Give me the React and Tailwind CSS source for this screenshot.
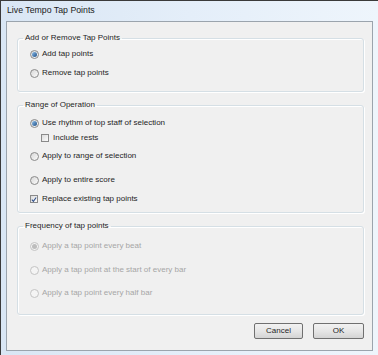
import React from 'react';

const font = { fontFamily: '"Liberation Sans", Arial, sans-serif' };

function Radio({ checked, disabled }) {
  return (
    <span
      className={`relative flex items-center justify-center w-[9px] h-[9px] rounded-full border ${
        disabled ? 'border-[#c4c4c4] bg-[#f4f4f4]' : 'border-[#8a8a8a] bg-gradient-to-br from-[#d8d8d8] to-[#fbfbfb]'
      }`}
    >
      {checked && (
        <span
          className={`w-[5px] h-[5px] rounded-full ${
            disabled ? 'bg-[#bdbdbd]' : 'bg-gradient-to-br from-[#8fc1ec] to-[#1d4f86]'
          }`}
        />
      )}
    </span>
  );
}

function Check({ checked }) {
  return (
    <span className="flex items-center justify-center w-[8px] h-[8px] border border-[#8a8a8a] bg-gradient-to-br from-[#dcdcdc] to-[#fbfbfb]">
      {checked && (
        <svg width="7" height="7" viewBox="0 0 7 7">
          <path d="M1 3.6 L2.8 5.6 L6 1.2" fill="none" stroke="#2f4f8a" strokeWidth="1.3" />
        </svg>
      )}
    </span>
  );
}

function Row({ children, label, disabled, className = '' }) {
  return (
    <div className={`flex items-center h-[12px] ${className}`}>
      <span className="w-[12px] flex justify-start">{children}</span>
      <span className={disabled ? 'text-[#a6a6a6]' : 'text-[#1e1e1e]'}>{label}</span>
    </div>
  );
}

function Group({ title, children, className = '' }) {
  return (
    <fieldset
      className={`ml-[10px] w-[347px] border border-[#d5dfe5] rounded-[3px] shadow-[inset_1px_1px_0_#ffffff,1px_1px_0_#ffffff] ${className}`}
    >
      <legend className="ml-[5px] px-[2px] h-[10px] leading-[10px] text-[#1e1e1e]">{title}</legend>
      {children}
    </fieldset>
  );
}

export default function App() {
  return (
    <div
      style={font}
      className="w-[378px] h-[355px] overflow-hidden border-t border-l border-[#3a3a3a] bg-gradient-to-r from-[#d9e6f4] via-[#e4eef9] to-[#eef5fc] text-[8px]"
    >
      {/* Title bar */}
      <div className="h-[20px] flex items-center pl-[6px] text-[8.75px] text-[#1b1b1b]">
        Live Tempo Tap Points
      </div>

      {/* Client area */}
      <div className="ml-[5px] w-[367px] h-[330px] border border-[#9ba4ad] bg-[#f0f0f0]">
        <div className="h-[11px]" />

        <Group title="Add or Remove Tap Points" className="pb-[12px]">
          <div className="pl-[12px]">
            <Row label="Add tap points" className="mt-[5px]">
              <Radio checked />
            </Row>
            <Row label="Remove tap points" className="mt-[7px]">
              <Radio />
            </Row>
          </div>
        </Group>

        <Group title="Range of Operation" className="mt-[8px] pb-[7px]">
          <div className="pl-[12px]">
            <Row label="Use rhythm of top staff of selection" className="mt-[7px]">
              <Radio checked />
            </Row>
            <Row label="Include rests" className="mt-[3px] ml-[11px]">
              <Check />
            </Row>
            <Row label="Apply to range of selection" className="mt-[6px]">
              <Radio />
            </Row>
            <Row label="Apply to entire score" className="mt-[12px]">
              <Radio />
            </Row>
            <Row label="Replace existing tap points" className="mt-[7px]">
              <Check checked />
            </Row>
          </div>
        </Group>

        <Group title="Frequency of tap points" className="mt-[8px] pb-[15px]">
          <div className="pl-[12px]">
            <Row label="Apply a tap point every beat" disabled className="mt-[9px]">
              <Radio checked disabled />
            </Row>
            <Row label="Apply a tap point at the start of every bar" disabled className="mt-[12px]">
              <Radio disabled />
            </Row>
            <Row label="Apply a tap point every half bar" disabled className="mt-[11px]">
              <Radio disabled />
            </Row>
          </div>
        </Group>

        <div className="mt-[8px] flex justify-end gap-[10px] pr-[8px]">
          <button className="w-[49px] h-[16px] rounded-[2px] border border-[#707070] bg-gradient-to-b from-[#f2f2f2] via-[#e6e6e6] to-[#d4d4d4] text-[#1e1e1e] text-[8px] leading-none">
            Cancel
          </button>
          <button className="w-[51px] h-[16px] rounded-[2px] border border-[#707070] bg-gradient-to-b from-[#f2f2f2] via-[#e6e6e6] to-[#d4d4d4] text-[#1e1e1e] text-[8px] leading-none">
            OK
          </button>
        </div>
      </div>
    </div>
  );
}
